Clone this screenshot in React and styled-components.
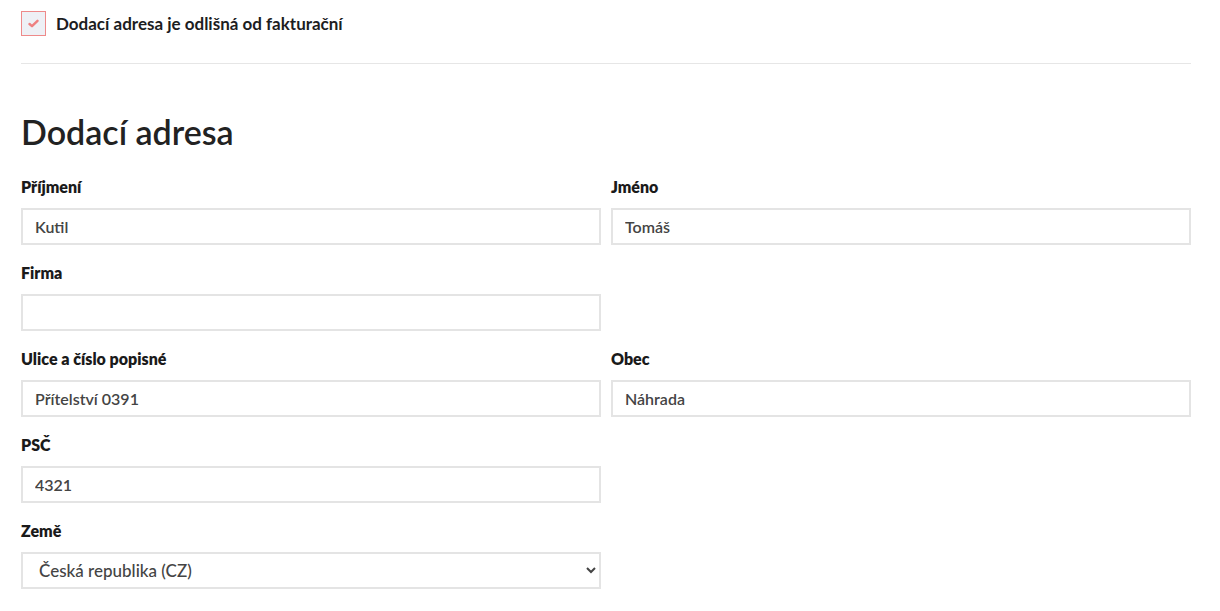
import React from 'react';
import styled, { createGlobalStyle } from 'styled-components';

const GlobalStyle = createGlobalStyle`
  body {
    margin: 0;
    background: #fff;
    font-family: Lato, "Noto Sans", sans-serif;
    color: #1d1d1f;
  }
`;

const Wrapper = styled.div`
  width: 1170px;
  margin-left: 21px;
  padding-top: 11px;
`;

const CheckRow = styled.label`
  display: flex;
  align-items: center;
  gap: 10px;
  height: 25px;
  cursor: pointer;
`;

const CheckBox = styled.span`
  box-sizing: border-box;
  width: 25px;
  height: 25px;
  border: 1px solid #ee8a8a;
  background: #eef0f5;
  display: flex;
  align-items: center;
  justify-content: center;
`;

const CheckText = styled.span`
  font-size: 17px;
  font-weight: 700;
  color: #1d1d1f;
`;

const Divider = styled.hr`
  border: 0;
  border-top: 1px solid #e6e6e6;
  margin: 27px 0 0;
`;

const Heading = styled.h2`
  font-size: 34px;
  font-weight: 600;
  color: #222;
  margin: 48px 0 0;
  line-height: 40px;
`;

const Grid = styled.div`
  display: grid;
  grid-template-columns: 580px 580px;
  column-gap: 10px;
  margin-top: 25px;
`;

const Field = styled.div`
  display: flex;
  flex-direction: column;
  grid-column: ${p => (p.$col ? p.$col : 'auto')};
  margin-bottom: 18px;
`;

const Label = styled.label`
  font-size: 16px;
  font-weight: 800;
  color: #1a1a1a;
  line-height: 20px;
  margin-bottom: 11px;
`;

const Input = styled.input`
  box-sizing: border-box;
  height: 37px;
  width: 100%;
  border: 2px solid #e4e4e4;
  border-radius: 0;
  padding: 0 12px;
  font-family: Lato, "Noto Sans", sans-serif;
  font-size: 16px;
  font-weight: 600;
  color: #444;
  outline: none;
`;

const Select = styled.select`
  box-sizing: border-box;
  height: 37px;
  width: 100%;
  border: 2px solid #e4e4e4;
  border-radius: 0;
  padding: 0 8px 0 12px;
  background: #fff;
  font-family: Lato, "Noto Sans", sans-serif;
  font-size: 17px;
  font-weight: 500;
  color: #444;
  outline: none;
`;

const Tick = () => (
  <svg width="11" height="9" viewBox="0 0 11 9">
    <path d="M1.5 5 L4 7.2 L9.5 1.8" fill="none" stroke="#ee8080" strokeWidth="2.4" strokeLinecap="round" strokeLinejoin="round" />
  </svg>
);

const fields = [
  { label: 'Příjmení', value: 'Kutil' },
  { label: 'Jméno', value: 'Tomáš' },
  { label: 'Firma', value: '', col: '1' },
  { label: 'Ulice a číslo popisné', value: 'Přítelství 0391', col: '1' },
  { label: 'Obec', value: 'Náhrada' },
  { label: 'PSČ', value: '4321', col: '1' },
];

export default function App() {
  return (
    <Wrapper>
      <GlobalStyle />
      <CheckRow>
        <CheckBox><Tick /></CheckBox>
        <CheckText>Dodací adresa je odlišná od fakturační</CheckText>
      </CheckRow>
      <Divider />
      <Heading>Dodací adresa</Heading>
      <Grid>
        {fields.map(f => (
          <Field key={f.label} $col={f.col}>
            <Label>{f.label}</Label>
            <Input defaultValue={f.value} />
          </Field>
        ))}
        <Field $col="1">
          <Label>Země</Label>
          <Select defaultValue="CZ">
            <option value="CZ">Česká republika (CZ)</option>
            <option value="SK">Slovenská republika (SK)</option>
          </Select>
        </Field>
      </Grid>
    </Wrapper>
  );
}
